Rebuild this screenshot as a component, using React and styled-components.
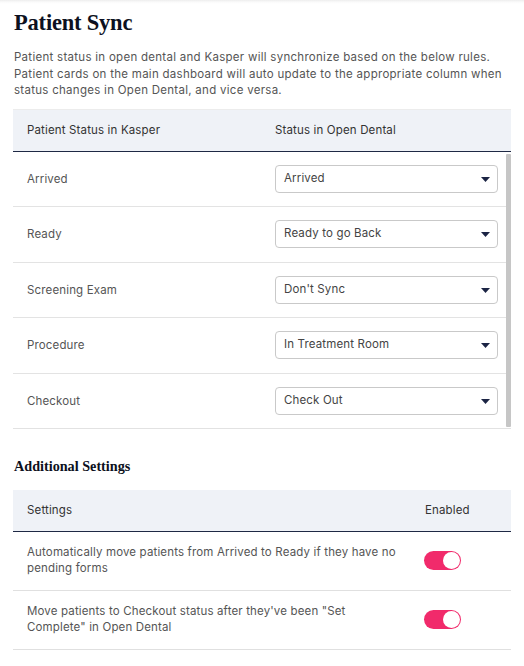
import React from 'react';
import styled, { createGlobalStyle } from 'styled-components';

const GlobalStyle = createGlobalStyle`
  html, body { margin: 0; padding: 0; background: #fff; }
  body { font-family: Inter, "Open Sans", sans-serif; -webkit-font-smoothing: antialiased; }
  * { box-sizing: border-box; }
`;

const Page = styled.div`
  width: 524px;
  height: 666px;
  overflow: hidden;
  padding: 8px 13px 0 13px;
  background: linear-gradient(#ededed 0px, #fafafa 2px, #fff 4px);
  letter-spacing: 0.15px;
`;

const Title = styled.h1`
  margin: 0 0 0 1px;
  font-family: "Liberation Serif", "DejaVu Serif", serif;
  font-weight: 700;
  font-size: 22.5px;
  line-height: 30px;
  color: #0c1020;
  letter-spacing: -0.2px;
`;

const Intro = styled.p`
  margin: 11px 0 0 1px;
  font-size: 11.5px;
  line-height: 16.5px;
  color: #555;
  letter-spacing: 0.28px;
`;

const Table = styled.div`
  margin-top: ${(p) => p.$mt}px;
  border-top: ${(p) => (p.$topLine ? '1px solid #ececec' : 'none')};
`;

const HeadRow = styled.div`
  display: grid;
  grid-template-columns: ${(p) => p.$cols};
  align-items: center;
  height: 42px;
  background: #eff2f7;
  border-bottom: 1.5px solid #1e2844;
  font-size: 11.5px;
  color: #333;
`;

const HeadCell = styled.div`
  padding-left: ${(p) => p.$pl}px;
`;

const BodyFrame = styled.div`
  position: relative;
  height: 277px;
  overflow: hidden;
  border-bottom: 1px solid #e2e2e2;
`;

const ScrollThumb = styled.div`
  position: absolute;
  top: 2px;
  right: 0;
  width: 5px;
  height: 273px;
  background: #c6c6c6;
  border-radius: 1px;
`;

const StatusRow = styled.div`
  display: grid;
  grid-template-columns: 249px 1fr;
  align-items: center;
  height: 55.5px;
  margin-right: 5px;
  border-bottom: 1px solid #e3e3e3;
  font-size: 11.5px;
  color: #555;
`;

const Cell = styled.div`
  padding-left: ${(p) => p.$pl}px;
`;

const Select = styled.div`
  width: 223px;
  height: 28px;
  border: 1px solid #c9c9c9;
  border-radius: 4px;
  display: flex;
  align-items: center;
  justify-content: space-between;
  padding: 0 7px 2px 8px;
  font-size: 11.5px;
  color: #444;
`;

const Caret = styled.svg`
  width: 9px;
  height: 5px;
  margin-top: 3px;
`;

const SubTitle = styled.h2`
  margin: 27px 0 0 1px;
  font-family: "Liberation Serif", "DejaVu Serif", serif;
  font-weight: 700;
  font-size: 14.2px;
  line-height: 20px;
  color: #0c1020;
  letter-spacing: 0;
`;

const SettingRow = styled.div`
  display: grid;
  grid-template-columns: 1fr 99px;
  align-items: center;
  height: 59px;
  border-bottom: 1px solid #e0e0e0;
  font-size: 11.5px;
  line-height: 16px;
  color: #555;
`;

const SettingText = styled.div`
  padding: 0 12px 2px 14px;
`;

const ToggleCell = styled.div`
  padding-left: 12px;
`;

const Toggle = styled.span`
  position: relative;
  display: block;
  width: 37px;
  height: 19px;
  border-radius: 10px;
  background: ${(p) => (p.$on ? '#f12a6b' : '#ccc')};
  &::after {
    content: '';
    position: absolute;
    top: 1px;
    ${(p) => (p.$on ? 'right: 1px;' : 'left: 1px;')}
    width: 17px;
    height: 17px;
    border-radius: 50%;
    background: #fff;
  }
`;

const statuses = [
  ['Arrived', 'Arrived'],
  ['Ready', 'Ready to go Back'],
  ['Screening Exam', "Don't Sync"],
  ['Procedure', 'In Treatment Room'],
  ['Checkout', 'Check Out'],
];

const settings = [
  'Automatically move patients from Arrived to Ready if they have no pending forms',
  'Move patients to Checkout status after they\'ve been "Set Complete" in Open Dental',
];

export default function App() {
  return (
    <>
      <GlobalStyle />
      <Page>
        <Title>Patient Sync</Title>
        <Intro>
          Patient status in open dental and Kasper will synchronize based on the below rules.
          Patient cards on the main dashboard will auto update to the appropriate column when
          status changes in Open Dental, and vice versa.
        </Intro>
        <Table $mt={10} $topLine>
          <HeadRow $cols="249px 1fr">
            <HeadCell $pl={14}>Patient Status in Kasper</HeadCell>
            <HeadCell $pl={13}>Status in Open Dental</HeadCell>
          </HeadRow>
          <BodyFrame>
            {statuses.map(([k, v]) => (
              <StatusRow key={k}>
                <Cell $pl={14}>{k}</Cell>
                <Cell $pl={13}>
                  <Select>
                    <span>{v}</span>
                    <Caret viewBox="0 0 9 5">
                      <path d="M0 0 H9 L4.5 5 Z" fill="#1b2444" />
                    </Caret>
                  </Select>
                </Cell>
              </StatusRow>
            ))}
            <ScrollThumb />
          </BodyFrame>
        </Table>
        <SubTitle>Additional Settings</SubTitle>
        <Table $mt={14}>
          <HeadRow $cols="1fr 99px">
            <HeadCell $pl={14}>Settings</HeadCell>
            <HeadCell $pl={13}>Enabled</HeadCell>
          </HeadRow>
          {settings.map((s) => (
            <SettingRow key={s}>
              <SettingText>{s}</SettingText>
              <ToggleCell>
                <Toggle $on />
              </ToggleCell>
            </SettingRow>
          ))}
        </Table>
      </Page>
    </>
  );
}
